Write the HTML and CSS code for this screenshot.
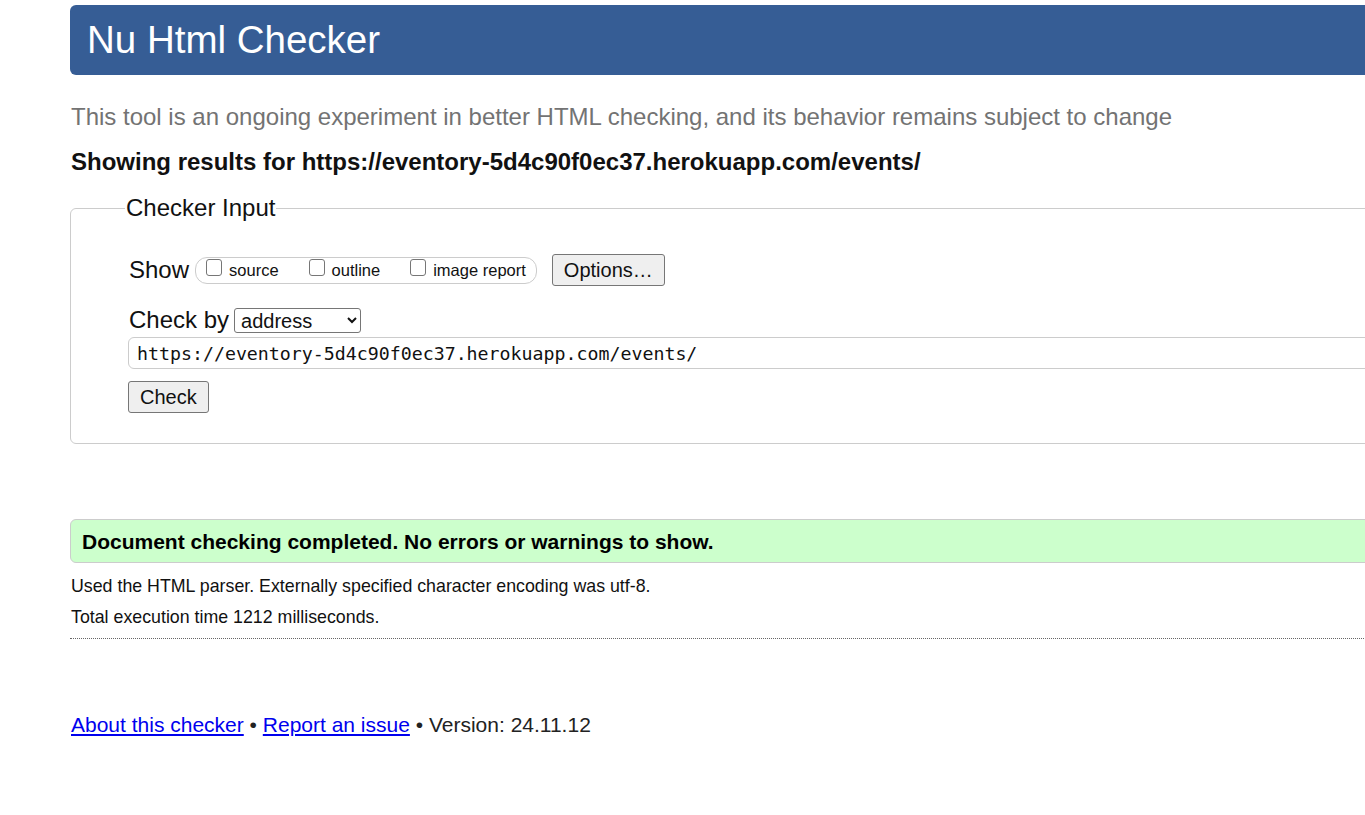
FILE: index.html
```html
<!DOCTYPE html>
<html lang="en">
<head>
<meta charset="utf-8">
<title>Nu Html Checker</title>
<link rel="stylesheet" href="styles.css">
</head>
<body>
<div class="page">
  <h1 class="banner">Nu Html Checker</h1>
  <p class="tagline">This tool is an ongoing experiment in better HTML checking, and its behavior remains subject to change</p>
  <p class="showing">Showing results for https://eventory-5d4c90f0ec37.herokuapp.com/events/</p>
  <form class="checker">
    <fieldset class="inputs">
      <legend class="legend">Checker Input</legend>
      <div class="row show-row">
        <span class="row-label">Show</span>
        <span class="checks">
          <label class="check"><input type="checkbox"> source</label>
          <label class="check"><input type="checkbox"> outline</label>
          <label class="check"><input type="checkbox"> image report</label>
        </span>
        <button type="button" class="btn">Options…</button>
      </div>
      <div class="row by-row">
        <span class="row-label">Check by</span>
        <select class="select"><option>address</option></select>
      </div>
      <input class="url" type="text" value="https://eventory-5d4c90f0ec37.herokuapp.com/events/">
      <div class="submit-row"><button type="button" class="btn">Check</button></div>
    </fieldset>
  </form>
  <div class="success">Document checking completed. No errors or warnings to show.</div>
  <p class="details first">Used the HTML parser. Externally specified character encoding was utf-8.</p>
  <p class="details">Total execution time 1212 milliseconds.</p>
  <hr class="rule">
  <p class="footer"><a href="#">About this checker</a> • <a href="#">Report an issue</a> • Version: 24.11.12</p>
</div>
</body>
</html>
```

FILE: styles.css
```css
html, body {
  margin: 0;
  padding: 0;
  background: #fff;
  overflow: hidden;
}
body {
  font-family: "Liberation Sans", Arial, sans-serif;
  color: #111;
}
.page {
  margin-left: 70px;
  width: 1400px;
  padding-top: 5px;
}
.banner {
  margin: 0;
  height: 70px;
  line-height: 70px;
  background: #365d95;
  color: #fff;
  font-weight: normal;
  font-size: 38.5px;
  padding-left: 17px;
  border-radius: 6px;
}
.tagline {
  margin: 28px 0 0 1px;
  font-size: 24px;
  line-height: 28px;
  color: #737373;
}
.showing {
  margin: 17px 0 0 1px;
  font-size: 24px;
  line-height: 28px;
  font-weight: bold;
  color: #111;
}
.checker {
  margin: 18px 0 0;
}
.inputs {
  margin: 0;
  border: 1px solid #ccc;
  border-radius: 6px;
  padding: 30px 0 30px 57px;
  min-height: 0;
}
.legend {
  font-size: 24px;
  padding: 0 1px;
  margin-left: -3px;
  color: #111;
}
.row {
  display: flex;
  align-items: center;
}
.row-label {
  font-size: 24px;
  margin-left: 1px;
}
.show-row {
  height: 36px;
}
.checks {
  display: inline-flex;
  align-items: center;
  height: 27px;
  box-sizing: border-box;
  margin-left: 6px;
  border: 1px solid #ccc;
  border-radius: 12px;
  padding: 0 10px 0 10px;
  font-size: 16.5px;
}
.check {
  display: inline-flex;
  align-items: center;
  margin-right: 30px;
}
.check:last-child {
  margin-right: 0;
}
.check input {
  appearance: none;
  -webkit-appearance: none;
  box-sizing: border-box;
  margin: 0 7px 5px 0;
  width: 16px;
  height: 17px;
  border: 1px solid #767676;
  border-radius: 3px;
  background: #fff;
}
.btn {
  font-family: "Liberation Sans", Arial, sans-serif;
  font-size: 20px;
  color: #111;
  background: #efefef;
  border: 1px solid #767676;
  border-radius: 3px;
  padding: 0 11px;
  height: 32px;
}
.show-row .btn {
  margin-left: 15px;
}
.by-row {
  margin-top: 17px;
  height: 30px;
}
.select {
  margin-left: 5px;
  font-family: "Liberation Sans", Arial, sans-serif;
  font-size: 20px;
  height: 25px;
  width: 127px;
  border: 1px solid #767676;
  border-radius: 3px;
  background: #fff;
  color: #111;
  padding: 0 2px;
}
.url {
  display: block;
  box-sizing: border-box;
  margin-top: 2px;
  width: 100%;
  height: 32px;
  border: 1px solid #ccc;
  border-radius: 6px;
  padding: 0 8px;
  font-family: "DejaVu Sans Mono", "Liberation Mono", monospace;
  font-size: 18.25px;
  color: #111;
}
.submit-row {
  margin-top: 12px;
}
.submit-row .btn {
  padding: 0 11px;
}
.success {
  margin-top: 75px;
  height: 44px;
  line-height: 44px;
  box-sizing: border-box;
  background: #ccffcc;
  border: 1px solid #ccc;
  border-radius: 6px;
  padding-left: 11px;
  font-weight: bold;
  font-size: 21px;
  color: #000;
}
.details {
  margin: 0 0 0 1px;
  font-size: 17.8px;
  line-height: 31px;
  color: #111;
}
.details.first {
  margin-top: 8px;
}
.rule {
  margin: 5px 0 0;
  border: 0;
  border-top: 1px dotted #666;
  height: 0;
}
.footer {
  margin: 74px 0 0 1px;
  font-size: 21px;
  color: #222;
}
.footer a {
  color: #0000ee;
}
```
